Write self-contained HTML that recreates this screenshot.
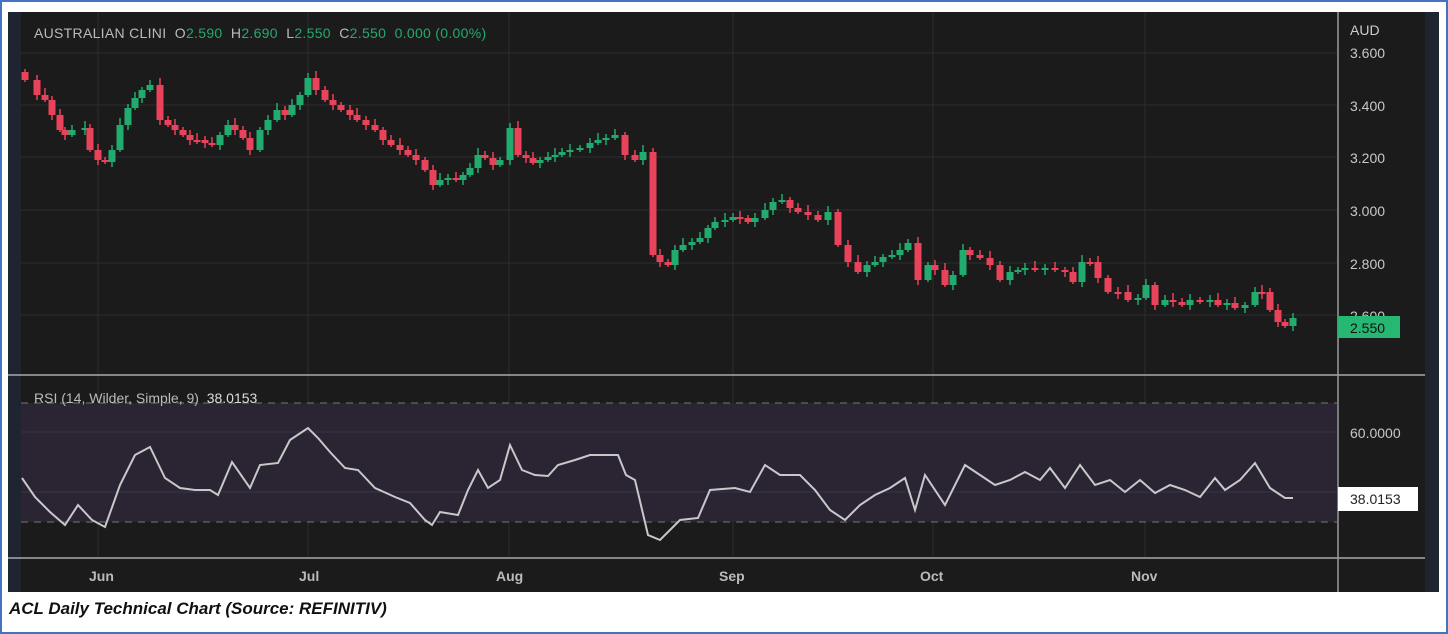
<!DOCTYPE html>
<html><head><meta charset="utf-8"><style>
html,body{margin:0;padding:0;background:#fff;}
body{width:1448px;height:634px;position:relative;overflow:hidden;font-family:"Liberation Sans",sans-serif;}
#frame{position:absolute;left:0;top:0;width:1444px;height:630px;border:2px solid #4472c4;}
svg{position:absolute;left:0;top:0;}
svg text{white-space:pre;}
.cap{position:absolute;left:9px;top:599px;font-family:"Liberation Sans",sans-serif;font-style:italic;font-weight:bold;font-size:17px;color:#111;}
</style></head><body>
<div id="frame"></div>
<svg id="s" width="1448" height="634" xmlns="http://www.w3.org/2000/svg">
<rect x="8" y="12" width="1431" height="580" fill="#1b1b1b"/>
<rect x="8" y="12" width="13" height="580" fill="#1f2530"/>
<rect x="1425" y="12" width="14" height="580" fill="#1f2530"/>
<g stroke="#2c2c2c" stroke-width="1">
<line x1="21" y1="53" x2="1337" y2="53"/><line x1="21" y1="105" x2="1337" y2="105"/>
<line x1="21" y1="157" x2="1337" y2="157"/><line x1="21" y1="210" x2="1337" y2="210"/>
<line x1="21" y1="263" x2="1337" y2="263"/><line x1="21" y1="315" x2="1337" y2="315"/>
<line x1="98" y1="12" x2="98" y2="558"/><line x1="308" y1="12" x2="308" y2="558"/>
<line x1="509" y1="12" x2="509" y2="558"/><line x1="733" y1="12" x2="733" y2="558"/>
<line x1="933" y1="12" x2="933" y2="558"/><line x1="1145" y1="12" x2="1145" y2="558"/>
</g>
<rect x="21" y="403" width="1316" height="119" fill="#2a2433"/>
<g stroke="#3a3645"><line x1="21" y1="432" x2="1337" y2="432"/><line x1="21" y1="492" x2="1337" y2="492"/></g>
<g stroke="#777" stroke-dasharray="7,6"><line x1="21" y1="403" x2="1337" y2="403"/><line x1="21" y1="522" x2="1337" y2="522"/></g>
<line x1="8" y1="375" x2="1425" y2="375" stroke="#aaa" stroke-width="1.5"/>
<line x1="8" y1="558" x2="1425" y2="558" stroke="#aaa" stroke-width="1.5"/>
<line x1="1338" y1="12" x2="1338" y2="592" stroke="#999" stroke-width="1.5"/>
<g id="candles"></g>
<polyline id="rsi" fill="none" stroke="#c8c8c8" stroke-width="2"/>
<g font-family="Liberation Sans,sans-serif" font-size="14" fill="#c8c8c8">
<text x="34" y="38" font-size="14" letter-spacing="0.3"><tspan fill="#bbb">AUSTRALIAN CLINI  O</tspan><tspan fill="#22ab6e">2.590</tspan><tspan fill="#bbb">  H</tspan><tspan fill="#22ab6e">2.690</tspan><tspan fill="#bbb">  L</tspan><tspan fill="#22ab6e">2.550</tspan><tspan fill="#bbb">  C</tspan><tspan fill="#22ab6e">2.550  0.000 (0.00%)</tspan></text>
<text x="1350" y="35" fill="#ccc">AUD</text>
<text x="1350" y="58">3.600</text><text x="1350" y="111">3.400</text><text x="1350" y="163">3.200</text>
<text x="1350" y="216">3.000</text><text x="1350" y="269">2.800</text><text x="1350" y="321">2.600</text>
<rect x="1338" y="316" width="62" height="22" fill="#26b772"/>
<text x="1350" y="333" fill="#111">2.550</text>
<text x="1350" y="438">60.0000</text>
<rect x="1338" y="487" width="80" height="24" fill="#fff"/>
<text x="1350" y="504" fill="#222">38.0153</text>
<text x="34" y="403" fill="#bbb">RSI (14, Wilder, Simple, 9)  <tspan fill="#ddd">38.0153</tspan></text>
<g font-weight="bold" fill="#bbb"><text x="89" y="581">Jun</text><text x="299" y="581">Jul</text><text x="496" y="581">Aug</text><text x="719" y="581">Sep</text><text x="920" y="581">Oct</text><text x="1131" y="581">Nov</text></g>
</g>
</svg>
<div class="cap">ACL Daily Technical Chart (Source: REFINITIV)</div>
<script>
(function(){
var c=[[25,80],[37,95],[45,100],[52,115],[60,130],[65,135],[72,130],[85,128],[90,150],[98,160],[105,162],[112,150],[120,125],[128,108],[135,98],[142,90],[150,85],[160,120],[168,125],[175,130],[183,135],[190,140],[197,140],[205,143],[212,145],[220,135],[228,125],[235,130],[243,138],[250,150],[260,130],[268,120],[277,110],[285,115],[292,105],[300,95],[308,78],[316,90],[325,100],[333,105],[341,110],[350,115],[357,120],[366,125],[375,130],[383,140],[391,145],[400,150],[408,155],[416,160],[425,170],[433,185],[440,180],[448,178],[456,180],[463,175],[470,168],[478,155],[485,158],[493,165],[500,160],[510,128],[518,155],[526,158],[533,163],[540,160],[548,157],[555,155],[562,152],[570,150],[580,148],[590,143],[598,140],[606,138],[615,135],[625,155],[635,160],[643,152],[653,255],[660,262],[668,265],[675,250],[683,245],[692,242],[700,238],[708,228],[715,222],[725,220],[733,217],[740,218],[748,222],[755,218],[765,210],[773,202],[782,200],[790,208],[798,212],[808,215],[818,220],[828,212],[838,245],[848,262],[858,272],[867,265],[875,262],[883,257],[892,255],[900,250],[908,243],[918,280],[928,265],[935,270],[945,285],[953,275],[963,250],[970,255],[980,258],[990,265],[1000,280],[1010,272],[1018,270],[1025,268],[1035,270],[1045,268],[1055,270],[1065,272],[1073,282],[1082,262],[1090,262],[1098,278],[1108,292],[1118,292],[1128,300],[1138,298],[1146,285],[1155,305],[1165,300],[1173,302],[1182,305],[1190,300],[1200,302],[1210,300],[1218,305],[1227,303],[1235,308],[1245,305],[1255,292],[1262,292],[1270,310],[1278,322],[1285,326],[1293,318]];
var NS='http://www.w3.org/2000/svg',grp=document.getElementById('candles'),prev=72,i;
function el(n,a){var e=document.createElementNS(NS,n);for(var k in a)e.setAttribute(k,a[k]);grp.appendChild(e);}
for(i=0;i<c.length;i++){var x=c[i][0],cl=c[i][1],op=prev;var up=cl<op;var t=Math.min(op,cl),b=Math.max(op,cl);if(b-t<2){b=t+2;}
var col=up?'#22ab6e':'#e8435a';var w=((i*7)%5)+3;
el('line',{x1:x,y1:t-w,x2:x,y2:b+((i*3)%6)+2,stroke:col,'stroke-width':1.5});
el('rect',{x:x-3.5,y:t,width:7,height:b-t,fill:col});prev=cl;}
var r=[[22,478],[35,497],[50,512],[65,525],[78,505],[92,520],[105,527],[120,485],[135,455],[150,447],[165,478],[180,488],[195,490],[210,490],[218,495],[232,462],[250,488],[260,465],[278,463],[290,440],[308,428],[318,438],[330,452],[345,468],[358,470],[375,488],[395,497],[410,503],[425,520],[432,525],[440,512],[458,515],[468,490],[478,470],[488,488],[500,480],[510,445],[522,470],[535,475],[548,476],[558,465],[575,460],[590,455],[605,455],[618,455],[626,475],[635,480],[648,535],[660,540],[680,520],[698,518],[710,490],[735,488],[750,492],[765,465],[780,475],[800,475],[815,490],[830,510],[845,520],[860,505],[875,495],[890,488],[905,478],[915,510],[925,475],[945,505],[965,465],[980,475],[995,485],[1010,480],[1025,472],[1040,480],[1050,468],[1065,488],[1080,465],[1095,485],[1110,480],[1125,492],[1140,480],[1155,493],[1170,485],[1185,490],[1200,497],[1215,478],[1225,490],[1240,480],[1255,463],[1270,488],[1285,498],[1293,498]];
document.getElementById('rsi').setAttribute('points',r.map(function(p){return p.join(',')}).join(' '));
})();
</script>
</body></html>
